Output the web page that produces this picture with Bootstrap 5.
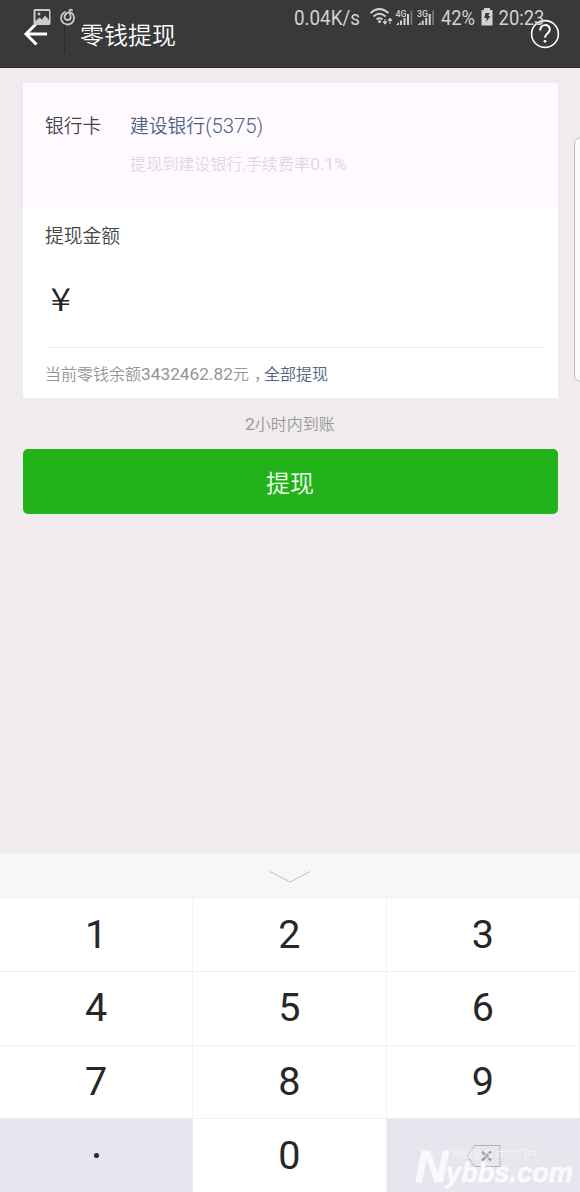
<!DOCTYPE html>
<html lang="zh-CN">
<head>
<meta charset="utf-8">
<meta name="viewport" content="width=device-width, initial-scale=1">
<title>零钱提现</title>
<link href="https://cdn.jsdelivr.net/npm/bootstrap@5.3.0/dist/css/bootstrap.min.css" rel="stylesheet">
<style>
body{background:#efebef;font-family:Roboto,"Noto Sans CJK SC",sans-serif;width:580px;height:1192px;overflow:hidden;line-height:1}
.topbar{height:68px;background:#393939;border-bottom:1px solid #2b2b2b;color:#fff}
.statusbar{height:36px;color:#d2d2d2}
.statusbar svg,.topbar svg{display:block;flex:none}
.statusbar text{font-family:Roboto,sans-serif;fill:#d2d2d2}
.back{margin:0 0 0 23px}
.split{width:1px;height:36px;background:#2b2b2b;margin:2px 0 0 15px}
.ttl{font-size:24px;line-height:36px;margin:4px 0 0 15px;font-weight:350}
.help{margin-right:20px}
.panel{margin:15px 22.5px 0;height:315px;background:#fff}
.bank{height:125px;background:#fefaff;padding:30px 0 0 22.5px}
.lbl{font-size:18.8px;line-height:28px;color:#454545;font-weight:350}
.bank .lbl{width:85px}
.link{color:#4f6284!important}
.num{font-size:20px;font-weight:350;line-height:1}
.bank .lbl .num{font-size:20.3px}
.hint{font-size:16.1px;line-height:24px;color:#dcd8de;margin-top:12px;font-weight:350}
.hint .num{font-size:17.4px;font-weight:400}
.amount{height:139.500px;margin:0 14px 0 22.5px;padding-top:15px;border-bottom:1px solid #f1f1f1}
.yen{margin:28px 0 0 4px;overflow:visible}
.foot{height:50px;line-height:54px;padding-left:22.5px;font-size:16px;color:#959595;font-weight:350}
.foot .num{font-size:17.3px;font-weight:400}
.pause{padding-left:5px;display:inline-block;width:15px;clip-path:inset(0)}
.note{height:51px;line-height:54px;font-size:16px;color:#999;font-weight:350}
.note .num{font-size:17px;font-weight:400}
.go{margin:0 22.5px;height:65px;border-radius:5px;background:#22b31a!important;border:0;font-size:24px;color:#f2fff2!important;line-height:65px;padding:3px 0 0;font-weight:350}
.pad{margin-top:339px}
.fold{height:44px;background:#f7f7f7}
.keys{display:grid;grid-template-columns:193px 193.5px 193.5px;grid-auto-rows:73.75px;background:#fff;font-size:39.5px;color:#272727}
.key{border-top:1px solid #f2f2f2;border-right:1px solid #f4f4f4}
.dim{background:#e6e6ee;border-color:#e9e9f0}
.dot{width:5px;height:5px;border-radius:50%;background:#262638}
.edge{left:574px;top:137px;width:20px;height:245px;border:1px solid #bdb9be;border-radius:7px;background:#fafafa}
.wm{left:410px;top:1135px}
</style>
</head>
<body class="position-relative">
<header class="topbar d-flex align-items-center">
  <svg class="back" width="26" height="26" viewBox="0 0 26 26" fill="none" stroke="#fff" stroke-width="3"><path d="M24 13H3M13.500 2.500 3 13l10.500 10.500"/></svg>
  <div class="split"></div>
  <div class="ttl">零钱提现</div>
  <svg class="help ms-auto" width="30" height="30" viewBox="0 0 30 30" fill="none" stroke="#fff"><circle cx="15" cy="15" r="13.400" stroke-width="1.600"/><path d="M10.200 11.500c0-7 9.600-7 9.600-1 0 4-4.800 4.100-4.800 8.200" stroke-width="2"/><circle cx="15" cy="22.300" r="1.400" fill="#fff" stroke="none"/></svg>
</header>
<div class="statusbar position-absolute top-0 start-0 w-100 d-flex">
  <svg width="280" height="36">
    <path fill="#cbcbcb" fill-rule="evenodd" d="M35 9h14q1.500 0 1.500 1.500v13q0 1.500-1.500 1.500H35q-1.500 0-1.500-1.500v-13Q33.500 9 35 9ZM35.500 11v10l4-3.500 2.500 2 3-4 4 4.500V11Z"/>
    <circle cx="39" cy="14" r="1.400" fill="#cbcbcb"/>
    <path fill="none" stroke="#cbcbcb" stroke-width="1.800" stroke-linecap="round" d="M65 12a6.500 6.500 0 1 0 6.500.8Q69 11.500 66.500 13.500c-3.500 3-2 6.500 1 6.500 4 0 3.500-3.500 2.200-7.500-.9-2.800.3-3.400 2.300-2.300"/>
  </svg>
  <svg width="300" height="36" viewBox="280 0 300 36">
    <text x="294" y="25.300" font-size="21" textLength="66" lengthAdjust="spacingAndGlyphs">0.04K/s</text>
    <g fill="none" stroke="#d2d2d2" stroke-width="1.800"><path d="M370.500 13q9-8 18 0M373.500 16.500q6-5.500 12 0M376.500 19.500q3-2.500 6 0"/></g>
    <circle cx="379.500" cy="21.500" r="1.500" fill="#d2d2d2"/>
    <path d="M385 19v4M390 24v-4M383.200 21.800h3.600l-1.800 2.400ZM388.200 20.500h3.600L390 18Z" stroke="#d2d2d2" fill="#d2d2d2"/>
    <g font-weight="500" font-size="8.500"><text x="395.500" y="16.500" textLength="11" lengthAdjust="spacingAndGlyphs">4G</text><text x="417" y="16.500" textLength="11" lengthAdjust="spacingAndGlyphs">3G</text></g>
    <g id="bars"><path fill="#d2d2d2" d="M396 25l3-3v3ZM400 20.500h2V25h-2ZM403.500 18h2v7h-2ZM407 14h2v11h-2Z"/><path fill="#777" d="M410.500 10.500h1.800V25h-1.800Z"/></g>
    <use href="#bars" x="21.700"/>
    <text x="441" y="25.300" font-size="21" textLength="34" lengthAdjust="spacingAndGlyphs">42%</text>
    <path fill="#d2d2d2" d="M484 8h6v2h2.500v15.500h-11V10H484Z"/><path fill="#393939" d="M485.500 13h4l-1.200 3h2.200l-4.500 6 .8-4h-2.600Z"/>
    <text x="498.500" y="25.300" font-size="21" textLength="46" lengthAdjust="spacingAndGlyphs">20:23</text>
  </svg>
</div>
<main>
  <section class="panel">
    <div class="bank d-flex">
      <div class="lbl">银行卡</div>
      <div><div class="lbl link w-auto">建设银行<span class="num">(5375)</span></div><div class="hint">提现到建设银行,手续费率<span class="num">0.1%</span></div></div>
    </div>
    <div class="amount">
      <div class="lbl">提现金额</div>
      <svg class="yen d-block" width="30" height="46" viewBox="0 0 30 46"><text x="1.500" y="32" font-size="32" fill="#222" font-family="Noto Sans CJK SC" font-weight="350" textLength="20.500" lengthAdjust="spacingAndGlyphs">¥</text></svg>
    </div>
    <div class="foot">当前零钱余额<span class="num">3432462.82</span>元<span class="pause">，</span><span class="link">全部提现</span></div>
  </section>
  <div class="note text-center"><span class="num">2</span>小时内到账</div>
  <div class="d-grid"><button type="button" class="btn go">提现</button></div>
</main>
<section class="pad">
  <div class="fold d-flex justify-content-center align-items-center"><svg class="mt-1" width="42" height="14" viewBox="0 0 42 14" fill="none" stroke="#bdbdbd"><path d="M1 1.500 21 12 41 1.500"/></svg></div>
  <div class="keys">
    <div class="key d-flex align-items-center justify-content-center">1</div><div class="key d-flex align-items-center justify-content-center">2</div><div class="key d-flex align-items-center justify-content-center">3</div>
    <div class="key d-flex align-items-center justify-content-center">4</div><div class="key d-flex align-items-center justify-content-center">5</div><div class="key d-flex align-items-center justify-content-center">6</div>
    <div class="key d-flex align-items-center justify-content-center">7</div><div class="key d-flex align-items-center justify-content-center">8</div><div class="key d-flex align-items-center justify-content-center">9</div>
    <div class="key dim d-flex align-items-center justify-content-center"><span class="dot"></span></div><div class="key d-flex align-items-center justify-content-center">0</div>
    <div class="key dim d-flex align-items-center justify-content-center"><svg width="36" height="24" viewBox="0 0 36 24" fill="none"><path d="M9.500 1.500H35v21H9.500L2 12Z" stroke="#b3b3ba"/><path d="m17 7.500 9 9m0-9-9 9" stroke="#96969e" stroke-width="2.400"/></svg></div>
  </div>
</section>
<div class="edge position-absolute"></div>
<svg class="wm position-absolute" width="170" height="57" viewBox="410 1135 170 57" fill="#fafafd" stroke="#fafafd" stroke-width=".6" font-family="Liberation Sans" font-weight="bold" font-style="italic">
  <text x="415" y="1182" font-size="44" textLength="33" lengthAdjust="spacingAndGlyphs">N</text>
  <text x="446" y="1181.500" font-size="27" textLength="127" lengthAdjust="spacingAndGlyphs">ybbs.com</text>
  <text x="452" y="1158" font-size="10" font-weight="normal" font-style="normal" stroke="none" font-family="Noto Sans CJK SC" textLength="85" opacity=".7">南阳论坛 中文门户</text>
</svg>
<script src="https://cdn.jsdelivr.net/npm/bootstrap@5.3.0/dist/js/bootstrap.bundle.min.js"></script>
</body>
</html>
